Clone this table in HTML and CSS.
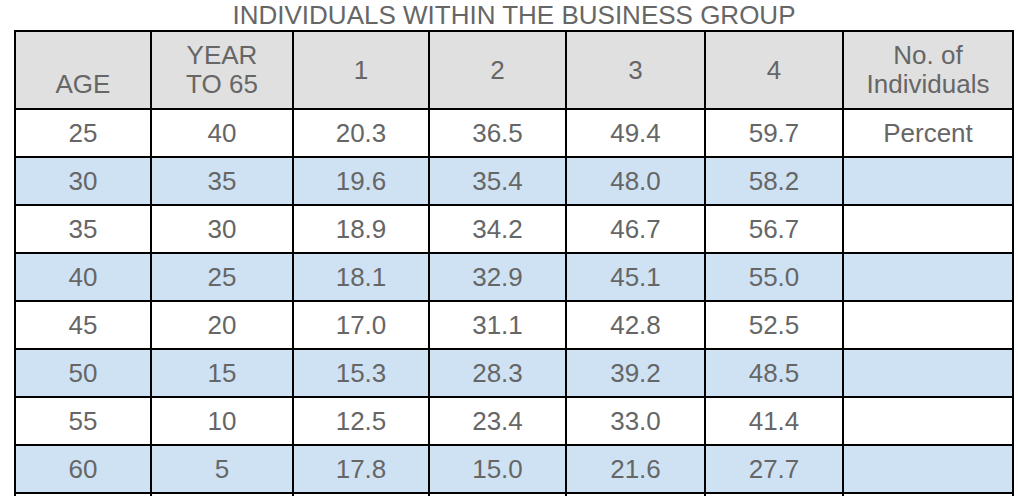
FILE: index.html
```html
<!DOCTYPE html>
<html lang="en">
<head>
<meta charset="utf-8">
<title>Individuals within the business group</title>
<link rel="stylesheet" href="styles.css">
</head>
<body>
<div class="sheet">
  <div class="title">INDIVIDUALS WITHIN THE BUSINESS GROUP</div>
  <table class="grid">
    <colgroup>
      <col class="c1"><col class="c2"><col class="c3"><col class="c4"><col class="c5"><col class="c6"><col class="c7">
    </colgroup>
    <thead>
      <tr>
        <th class="bottom">AGE</th>
        <th class="bottom">YEAR<br>TO 65</th>
        <th>1</th>
        <th>2</th>
        <th>3</th>
        <th>4</th>
        <th>No. of<br>Individuals</th>
      </tr>
    </thead>
    <tbody>
      <tr><td>25</td><td>40</td><td>20.3</td><td>36.5</td><td>49.4</td><td>59.7</td><td>Percent</td></tr>
      <tr class="blue"><td>30</td><td>35</td><td>19.6</td><td>35.4</td><td>48.0</td><td>58.2</td><td></td></tr>
      <tr><td>35</td><td>30</td><td>18.9</td><td>34.2</td><td>46.7</td><td>56.7</td><td></td></tr>
      <tr class="blue"><td>40</td><td>25</td><td>18.1</td><td>32.9</td><td>45.1</td><td>55.0</td><td></td></tr>
      <tr><td>45</td><td>20</td><td>17.0</td><td>31.1</td><td>42.8</td><td>52.5</td><td></td></tr>
      <tr class="blue"><td>50</td><td>15</td><td>15.3</td><td>28.3</td><td>39.2</td><td>48.5</td><td></td></tr>
      <tr><td>55</td><td>10</td><td>12.5</td><td>23.4</td><td>33.0</td><td>41.4</td><td></td></tr>
      <tr class="blue"><td>60</td><td>5</td><td>17.8</td><td>15.0</td><td>21.6</td><td>27.7</td><td></td></tr>
      <tr><td></td><td></td><td></td><td></td><td></td><td></td><td></td></tr>
    </tbody>
  </table>
</div>
</body>
</html>
```

FILE: styles.css
```css
html, body {
  margin: 0;
  padding: 0;
  background: #ffffff;
}

body {
  font-family: "Liberation Sans", Arial, sans-serif;
  color: #666666;
  overflow: hidden;
}

.sheet {
  padding-left: 14px;
  width: 1000px;
}

.title {
  font-size: 26px;
  line-height: 30px;
  height: 30px;
  text-align: center;
  white-space: nowrap;
}

.grid {
  border-collapse: separate;
  border-spacing: 0;
  table-layout: fixed;
  width: 1000px;
  font-size: 26px;
  line-height: 29px;
}

.c1 { width: 138px; }
.c2 { width: 142px; }
.c3 { width: 136px; }
.c4 { width: 137px; }
.c5 { width: 139px; }
.c6 { width: 138px; }
.c7 { width: 170px; }

.grid th,
.grid td {
  box-sizing: border-box;
  border-right: 2px solid #000000;
  border-bottom: 2px solid #000000;
  padding: 0;
  text-align: center;
  font-weight: normal;
  white-space: nowrap;
  overflow: hidden;
}

.grid th:first-child,
.grid td:first-child {
  border-left: 2px solid #000000;
}

.grid th {
  background: #e0e0e0;
  border-top: 2px solid #000000;
  height: 80px;
  vertical-align: middle;
}

.grid th.bottom {
  vertical-align: bottom;
  padding-bottom: 9px;
}

.grid td {
  height: 48px;
  vertical-align: middle;
}

.grid tr.blue td {
  background: #cfe2f3;
}
```
